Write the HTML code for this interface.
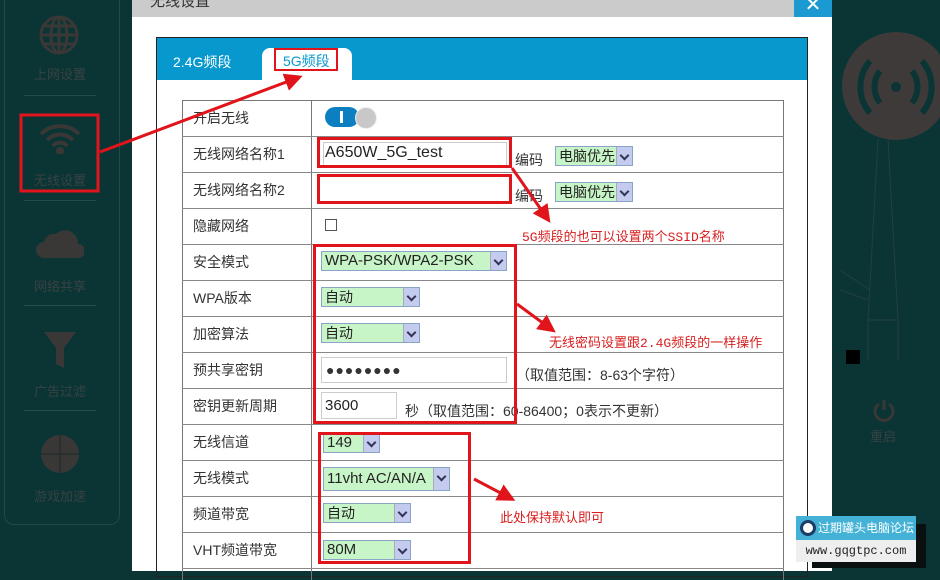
<!DOCTYPE html>
<html><head><meta charset="utf-8"><style>
*{margin:0;padding:0;box-sizing:border-box}
body{width:940px;height:571px;overflow:hidden;background:#0b3434;font-family:"Liberation Sans","Noto Sans CJK SC",sans-serif;position:relative}
.a{position:absolute}
.side{left:4px;top:-10px;width:116px;height:535px;border:1px solid #1d4a4a;border-radius:10px}
.stxt{color:#384242;font-size:13px;width:120px;text-align:center;left:0}
.sep{left:24px;width:72px;height:1px;background:#1f4d4d}
.lbl{font-size:14px;color:#333}
.sel{border:1px solid #8aa4c8;background:#c8f5c8;height:20px;font-size:14px;color:#222;padding-left:3px;line-height:18px}
.sel i{position:absolute;right:0;top:0;width:16px;height:18px;background:#c3cbef;border-left:1px solid #aab}
.sel i:after{content:"";position:absolute;left:4px;top:5px;width:5px;height:5px;border-right:2px solid #335;border-bottom:2px solid #335;transform:rotate(45deg)}
.inp{border:1px solid #ccc;background:#fff}
.red{border:3px solid #e0141a}
.rt{color:#d81e1e;font-size:13px}
</style></head><body>
<div class="a side"></div>
<svg class="a" style="left:38px;top:14px" width="42" height="42" viewBox="0 0 42 42" fill="none" stroke="#3a3737" stroke-width="3"><circle cx="21" cy="21" r="18"/><ellipse cx="21" cy="21" rx="8" ry="18"/><line x1="3" y1="21" x2="39" y2="21"/><line x1="21" y1="3" x2="21" y2="39"/><path d="M6 12h30M6 30h30"/></svg>
<div class="a stxt" style="top:64px">上网设置</div>
<div class="a sep" style="top:95px"></div>
<svg class="a" style="left:38px;top:122px" width="44" height="32" viewBox="0 0 44 32" fill="none" stroke="#3a3737" stroke-width="4"><path d="M3 12a27 27 0 0 1 38 0M9 18a18 18 0 0 1 26 0M15 24a9 9 0 0 1 14 0"/><circle cx="22" cy="29" r="2" fill="#3a3737"/></svg>
<div class="a stxt" style="top:170px">无线设置</div>
<div class="a sep" style="top:200px"></div>
<svg class="a" style="left:36px;top:226px" width="48" height="34" viewBox="0 0 48 34"><path d="M8 32a8 8 0 0 1 0-16a10 10 0 0 1 12-8a13 13 0 0 1 22 10a7 7 0 0 1 0 14z" fill="#3a3737"/></svg>
<div class="a stxt" style="top:276px">网络共享</div>
<div class="a sep" style="top:305px"></div>
<svg class="a" style="left:42px;top:330px" width="36" height="40" viewBox="0 0 36 40"><path d="M2 2h32l-12 16v20l-8-4v-16z" fill="#3a3737"/></svg>
<div class="a stxt" style="top:381px">广告过滤</div>
<div class="a sep" style="top:410px"></div>
<svg class="a" style="left:40px;top:434px" width="40" height="40" viewBox="0 0 40 40"><circle cx="20" cy="20" r="19" fill="#3a3737"/><path d="M20 1v38M1 20h38" stroke="#1a2a2a" stroke-width="1"/></svg>
<div class="a stxt" style="top:486px">游戏加速</div>
<div class="a" style="left:842px;top:32px;width:108px;height:108px;border-radius:50%;background:#3e3a3a"></div>
<svg class="a" style="left:850px;top:55px" width="90" height="64" viewBox="0 0 90 64" fill="none" stroke="#0b3434" stroke-width="6"><path d="M20 6a40 40 0 0 0 0 52M30 16a26 26 0 0 0 0 32M62 16a26 26 0 0 1 0 32M72 6a40 40 0 0 1 0 52"/><circle cx="46" cy="32" r="5" fill="#0b3434" stroke="none"/></svg>
<svg class="a" style="left:840px;top:140px" width="100" height="220" viewBox="0 0 100 220" fill="none" stroke="#24403f" stroke-width="1"><path d="M38 0l-10 180h30l-10-180M28 180v40M58 180v40M0 130l30 20M0 150l28 10"/></svg>
<div class="a" style="left:846px;top:350px;width:14px;height:14px;background:#000"></div>
<svg class="a" style="left:872px;top:398px" width="24" height="24" viewBox="0 0 24 24" fill="none" stroke="#3a3737" stroke-width="3"><path d="M7 6a9 9 0 1 0 10 0M12 2v10"/></svg>
<div class="a" style="left:870px;top:426px;font-size:13px;color:#384242">重启</div>
<div class="a" style="left:132px;top:0;width:700px;height:571px;background:#fff"></div>
<div class="a" style="left:132px;top:0;width:700px;height:17px;background:#cbcbcb"></div>
<div class="a" style="left:150px;top:-10px;font-size:15px;color:#333">无线设置</div>
<div class="a" style="left:794px;top:0;width:38px;height:17px;background:#1a9ad0;color:#fff;font-size:20px;text-align:center;line-height:10px">✕</div>
<div class="a" style="left:156px;top:37px;width:652px;height:540px;border:1px solid #222"></div>
<div class="a" style="left:157px;top:38px;width:650px;height:42px;background:#0799cd"></div>
<div class="a" style="left:173px;top:52px;color:#fff;font-size:14px">2.4G频段</div>
<div class="a" style="left:262px;top:48px;width:90px;height:32px;background:#fff;border-radius:8px 8px 0 0"></div>
<div class="a red" style="left:274px;top:48px;width:64px;height:23px;border-width:2px"></div>
<div class="a" style="left:283px;top:51px;color:#0799cd;font-size:14px">5G频段</div>
<div class="a" style="left:182px;top:100px;width:602px;height:480px;border:1px solid #777;border-bottom:none"></div>
<div class="a" style="left:311px;top:100px;width:1px;height:480px;background:#777"></div>
<div id="rows"></div>
<div class="a lbl" style="left:193px;top:108px">开启无线</div>
<div class="a lbl" style="left:193px;top:144px">无线网络名称1</div>
<div class="a lbl" style="left:193px;top:180px">无线网络名称2</div>
<div class="a lbl" style="left:193px;top:216px">隐藏网络</div>
<div class="a lbl" style="left:193px;top:252px">安全模式</div>
<div class="a lbl" style="left:193px;top:288px">WPA版本</div>
<div class="a lbl" style="left:193px;top:324px">加密算法</div>
<div class="a lbl" style="left:193px;top:360px">预共享密钥</div>
<div class="a lbl" style="left:193px;top:396px">密钥更新周期</div>
<div class="a lbl" style="left:193px;top:432px">无线信道</div>
<div class="a lbl" style="left:193px;top:468px">无线模式</div>
<div class="a lbl" style="left:193px;top:504px">频道带宽</div>
<div class="a lbl" style="left:193px;top:540px">VHT频道带宽</div>
<div class="a" style="left:325px;top:107px;width:34px;height:20px;border-radius:10px;background:#0b7fc0"></div>
<div class="a" style="left:340px;top:111px;width:3px;height:12px;background:#fff"></div>
<div class="a" style="left:355px;top:107px;width:22px;height:22px;border-radius:50%;background:#c8c8c8;border:1px solid #eee"></div>
<div class="a inp" style="left:323px;top:142px;width:184px;height:24px"></div>
<div class="a" style="left:325px;top:144px;font-size:16px;color:#222">A650W_5G_test</div>
<div class="a red" style="left:317px;top:137px;width:195px;height:31px"></div>
<div class="a red" style="left:317px;top:174px;width:195px;height:30px"></div>
<div class="a lbl" style="left:515px;top:150px">编码</div>
<div class="a lbl" style="left:515px;top:186px">编码</div>
<div class="a sel" style="left:555px;top:146px;width:78px">电脑优先<i></i></div>
<div class="a sel" style="left:555px;top:182px;width:78px">电脑优先<i></i></div>
<div class="a" style="left:325px;top:219px;width:12px;height:12px;border:1px solid #555"></div>
<div class="a sel" style="left:321px;top:251px;width:186px;font-size:15px">WPA-PSK/WPA2-PSK<i></i></div>
<div class="a sel" style="left:321px;top:287px;width:99px">自动<i></i></div>
<div class="a sel" style="left:321px;top:323px;width:99px">自动<i></i></div>
<div class="a inp" style="left:321px;top:357px;width:186px;height:26px;font-size:14px;line-height:24px;padding-left:4px;color:#333;letter-spacing:1px">●●●●●●●●</div>
<div class="a lbl" style="left:516px;top:365px">（取值范围：8-63个字符）</div>
<div class="a inp" style="left:321px;top:392px;width:76px;height:27px;font-size:15px;line-height:25px;padding-left:3px;color:#222">3600</div>
<div class="a lbl" style="left:405px;top:401px">秒（取值范围：60-86400；0表示不更新）</div>
<div class="a red" style="left:313px;top:244px;width:204px;height:180px"></div>
<div class="a sel" style="left:323px;top:433px;width:57px;font-size:15px">149<i></i></div>
<div class="a sel" style="left:323px;top:467px;width:127px;height:24px;line-height:22px;font-size:15px">11vht AC/AN/A<i style="height:22px"></i></div>
<div class="a sel" style="left:323px;top:503px;width:88px">自动<i></i></div>
<div class="a sel" style="left:323px;top:540px;width:88px;font-size:15px">80M<i></i></div>
<div class="a red" style="left:318px;top:432px;width:153px;height:132px"></div>
<div class="a rt" style="left:522px;top:226px;font-family:'Liberation Mono','Noto Sans CJK SC',monospace">5G频段的也可以设置两个SSID名称</div>
<div class="a rt" style="left:549px;top:332px;font-family:'Liberation Mono','Noto Sans CJK SC',monospace">无线密码设置跟2.4G频段的一样操作</div>
<div class="a rt" style="left:500px;top:507px">此处保持默认即可</div>
<svg class="a" style="left:0;top:0" width="940" height="571" viewBox="0 0 940 571">
<defs><marker id="m" markerWidth="6" markerHeight="6" refX="4" refY="3" orient="auto"><path d="M0 0L6 3L0 6z" fill="#e0141a"/></marker></defs>
<g stroke="#e0141a" stroke-width="3" fill="none" marker-end="url(#m)">
<line x1="100" y1="152" x2="297" y2="78"/>
<line x1="512" y1="168" x2="547" y2="218"/>
<line x1="517" y1="304" x2="551" y2="329"/>
<line x1="474" y1="479" x2="510" y2="498"/>
</g>
<rect x="21" y="115" width="77" height="76" fill="none" stroke="#e0141a" stroke-width="3"/>
</svg>
<div class="a" style="left:812px;top:524px;width:114px;height:44px;background:#0a0f10"></div>
<div class="a" style="left:796px;top:516px;width:120px;height:24px;background:#43b2d6;color:#fff;font-size:12px;line-height:24px;padding-left:22px">过期罐头电脑论坛</div>
<div class="a" style="left:800px;top:520px;width:16px;height:16px;border-radius:50%;border:3px solid #1a3d6a;background:#fff"></div>
<div class="a" style="left:796px;top:540px;width:120px;height:22px;background:#eee;color:#222;font-size:12px;line-height:22px;text-align:center;font-family:'Liberation Mono',monospace">www.gqgtpc.com</div>
<script>
var h='';for(var y=136;y<571;y+=36)h+='<div class="a" style="left:182px;top:'+y+'px;width:602px;height:1px;background:#888"></div>';document.getElementById('rows').innerHTML=h;
</script>
</body></html>
